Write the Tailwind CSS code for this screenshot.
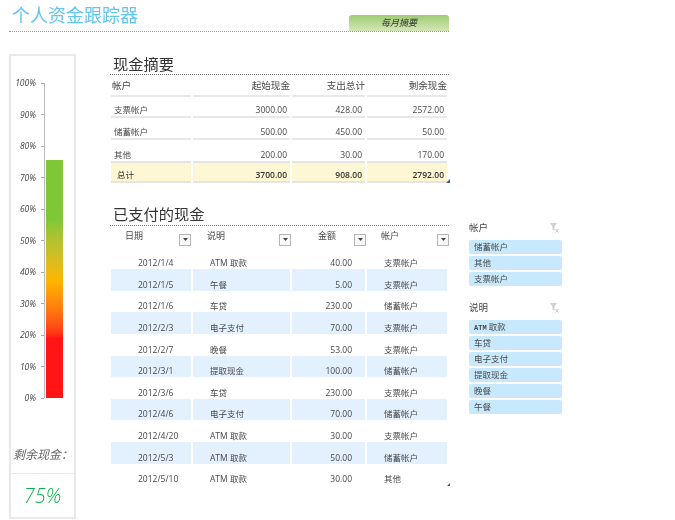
<!DOCTYPE html>
<html lang="zh">
<head>
<meta charset="utf-8">
<script src="https://cdn.jsdelivr.net/npm/@tailwindcss/browser@4"></script>
</head>
<body class="bg-white">
<div class="w-[675px] h-[520px] overflow-hidden blur-[0.3px] font-['Open_Sans','Noto_Sans_CJK_SC',sans-serif] text-[#484848] text-[8.5px] leading-[12px]">
  <header class="ml-[9px] w-[440px] h-[32px] flex justify-between items-end border-b border-dotted border-[#999]">
    <h1 class="pl-[3px] pb-[4px] text-[18px] leading-[24px] text-[#62c6f2]">个人资金跟踪器</h1>
    <div class="w-[100px] h-[16px] rounded-t-[3px] bg-linear-to-b from-[#9fcb70] to-[#d3e7b6] text-center text-[9px] leading-[16px] italic text-[#333]">每月摘要</div>
  </header>

  <div class="ml-[9px] mt-[22px] flex items-start">
    <aside class="w-[67px] h-[465px] border-2 border-[#e9e9e9] flex flex-col">
      <div class="mt-[22px] flex items-start h-[325px]">
        <div class="w-[33px] h-[325px] flex flex-col justify-between italic text-[8.5px] text-[#444]">
          <div class="h-[10px] leading-[10px] flex justify-end items-center">100%<span class="ml-[5px] w-[3px] h-px bg-[#aaa]"></span></div>
          <div class="h-[10px] leading-[10px] flex justify-end items-center">90%<span class="ml-[5px] w-[3px] h-px bg-[#aaa]"></span></div>
          <div class="h-[10px] leading-[10px] flex justify-end items-center">80%<span class="ml-[5px] w-[3px] h-px bg-[#aaa]"></span></div>
          <div class="h-[10px] leading-[10px] flex justify-end items-center">70%<span class="ml-[5px] w-[3px] h-px bg-[#aaa]"></span></div>
          <div class="h-[10px] leading-[10px] flex justify-end items-center">60%<span class="ml-[5px] w-[3px] h-px bg-[#aaa]"></span></div>
          <div class="h-[10px] leading-[10px] flex justify-end items-center">50%<span class="ml-[5px] w-[3px] h-px bg-[#aaa]"></span></div>
          <div class="h-[10px] leading-[10px] flex justify-end items-center">40%<span class="ml-[5px] w-[3px] h-px bg-[#aaa]"></span></div>
          <div class="h-[10px] leading-[10px] flex justify-end items-center">30%<span class="ml-[5px] w-[3px] h-px bg-[#aaa]"></span></div>
          <div class="h-[10px] leading-[10px] flex justify-end items-center">20%<span class="ml-[5px] w-[3px] h-px bg-[#aaa]"></span></div>
          <div class="h-[10px] leading-[10px] flex justify-end items-center">10%<span class="ml-[5px] w-[3px] h-px bg-[#aaa]"></span></div>
          <div class="h-[10px] leading-[10px] flex justify-end items-center">0%<span class="ml-[5px] w-[3px] h-px bg-[#aaa]"></span></div>
        </div>
        <div class="mt-[5px] h-[315px] flex items-end border-l border-[#bbb]">
          <div class="ml-[1px] w-[17px] h-[238px] bg-linear-to-t from-[#ff1515] from-25% via-[#ffb400] via-49% to-[#7fc737] to-75%"></div>
        </div>
      </div>
      <div class="mt-[44px] h-[16px] leading-[16px] pl-[2px] text-[12px] italic text-[#666]">剩余现金：</div>
      <div class="mt-[10px] flex-1 border-t border-[#e9e9e9] flex items-center justify-center text-[20px] font-light italic text-[#0fae4c]">75%</div>
    </aside>

    <main class="ml-[34px] w-[339px]">
      <h2 class="h-[21px] pl-[3px] text-[15.25px] leading-[20px] text-[#333] border-b border-dotted border-[#777]">现金摘要</h2>
      <div class="relative ml-[1px] grid grid-cols-[80px_97px_73px_80px] gap-x-[2px] auto-rows-[21.6px]">
        <div class="h-[22px] border-b-2 border-[#e8e8e8] pl-[1px] text-[9.6px] pt-[5px]">帐户</div>
        <div class="h-[22px] border-b-2 border-[#e8e8e8] text-right text-[9.6px] pt-[5px]">起始现金</div>
        <div class="h-[22px] border-b-2 border-[#e8e8e8] text-right text-[9.6px] pt-[5px]">支出总计</div>
        <div class="h-[22px] border-b-2 border-[#e8e8e8] text-right text-[9.6px] pt-[5px]">剩余现金</div>

        <div class="flex items-end pl-[3px] border-b-2 border-[#e8e8e8]">支票帐户</div>
        <div class="flex items-end justify-end pr-[3px] border-b-2 border-[#e8e8e8]">3000.00</div>
        <div class="flex items-end justify-end pr-[3px] border-b-2 border-[#e8e8e8]">428.00</div>
        <div class="flex items-end justify-end pr-[3px] border-b-2 border-[#e8e8e8]">2572.00</div>

        <div class="flex items-end pl-[3px] border-b-2 border-[#e8e8e8]">储蓄帐户</div>
        <div class="flex items-end justify-end pr-[3px] border-b-2 border-[#e8e8e8]">500.00</div>
        <div class="flex items-end justify-end pr-[3px] border-b-2 border-[#e8e8e8]">450.00</div>
        <div class="flex items-end justify-end pr-[3px] border-b-2 border-[#e8e8e8]">50.00</div>

        <div class="flex items-end pl-[3px]">其他</div>
        <div class="flex items-end justify-end pr-[3px]">200.00</div>
        <div class="flex items-end justify-end pr-[3px]">30.00</div>
        <div class="flex items-end justify-end pr-[3px]">170.00</div>

        <div class="flex items-end pl-[6px] h-[22px] bg-[#fdf7d3] border-y-2 border-y-[#e4e4e4] text-[#333]">总计</div>
        <div class="flex items-end justify-end pr-[3px] h-[22px] bg-[#fdf7d3] border-y-2 border-y-[#e4e4e4] font-semibold text-[#333]">3700.00</div>
        <div class="flex items-end justify-end pr-[3px] h-[22px] bg-[#fdf7d3] border-y-2 border-y-[#e4e4e4] font-semibold text-[#333]">908.00</div>
        <div class="flex items-end justify-end pr-[3px] h-[22px] bg-[#fdf7d3] border-y-2 border-y-[#e4e4e4] font-semibold text-[#333]">2792.00</div>
        <svg class="absolute right-[-1px] bottom-[0px] w-[4px] h-[4px]" viewBox="0 0 4 4"><path d="M4 0V4H0Z" fill="#3a5a9a"/></svg>
      </div>

      <h2 class="mt-[21px] h-[22px] pl-[3px] text-[15.25px] leading-[21px] text-[#333] border-b border-dotted border-[#777]">已支付的现金</h2>
      <div class="relative ml-[1px] grid grid-cols-[80px_97px_73px_80px] gap-x-[2px] auto-rows-[21.6px]">
        <div class="h-[21px] flex justify-between items-start pl-[14px] pt-[4px] text-[9px]">日期
          <span class="mt-[4px] w-[12px] h-[12px] border border-[#b5b5b5] bg-[#f8f8f8] flex items-center justify-center"><svg class="w-[5px] h-[3px]" viewBox="0 0 5 3"><path d="M0 0H5L2.5 3Z" fill="#444"/></svg></span></div>
        <div class="h-[21px] flex justify-between items-start pl-[14px] pt-[4px] text-[9px]">说明
          <span class="mt-[4px] -mr-[1px] w-[12px] h-[12px] border border-[#b5b5b5] bg-[#f8f8f8] flex items-center justify-center"><svg class="w-[5px] h-[3px]" viewBox="0 0 5 3"><path d="M0 0H5L2.5 3Z" fill="#444"/></svg></span></div>
        <div class="h-[21px] flex justify-between items-start pl-[26px] pt-[4px] text-[9px]">金额
          <span class="mt-[4px] -mr-[1px] w-[12px] h-[12px] border border-[#b5b5b5] bg-[#f8f8f8] flex items-center justify-center"><svg class="w-[5px] h-[3px]" viewBox="0 0 5 3"><path d="M0 0H5L2.5 3Z" fill="#444"/></svg></span></div>
        <div class="h-[21px] flex justify-between items-start pl-[14px] pt-[4px] text-[9px]">帐户
          <span class="mt-[4px] -mr-[2px] w-[12px] h-[12px] border border-[#b5b5b5] bg-[#f8f8f8] flex items-center justify-center"><svg class="w-[5px] h-[3px]" viewBox="0 0 5 3"><path d="M0 0H5L2.5 3Z" fill="#444"/></svg></span></div>

        <div class="flex items-end pl-[27px]">2012/1/4</div><div class="flex items-end pl-[17px]">ATM 取款</div><div class="flex items-end justify-end pr-[13px]">40.00</div><div class="flex items-end pl-[17px]">支票帐户</div>
        <div class="flex items-end pl-[27px] bg-[#e3f0fe]">2012/1/5</div><div class="flex items-end pl-[17px] bg-[#e3f0fe]">午餐</div><div class="flex items-end justify-end pr-[13px] bg-[#e3f0fe]">5.00</div><div class="flex items-end pl-[17px] bg-[#e3f0fe]">支票帐户</div>
        <div class="flex items-end pl-[27px]">2012/1/6</div><div class="flex items-end pl-[17px]">车贷</div><div class="flex items-end justify-end pr-[13px]">230.00</div><div class="flex items-end pl-[17px]">储蓄帐户</div>
        <div class="flex items-end pl-[27px] bg-[#e3f0fe]">2012/2/3</div><div class="flex items-end pl-[17px] bg-[#e3f0fe]">电子支付</div><div class="flex items-end justify-end pr-[13px] bg-[#e3f0fe]">70.00</div><div class="flex items-end pl-[17px] bg-[#e3f0fe]">支票帐户</div>
        <div class="flex items-end pl-[27px]">2012/2/7</div><div class="flex items-end pl-[17px]">晚餐</div><div class="flex items-end justify-end pr-[13px]">53.00</div><div class="flex items-end pl-[17px]">支票帐户</div>
        <div class="flex items-end pl-[27px] bg-[#e3f0fe]">2012/3/1</div><div class="flex items-end pl-[17px] bg-[#e3f0fe]">提取现金</div><div class="flex items-end justify-end pr-[13px] bg-[#e3f0fe]">100.00</div><div class="flex items-end pl-[17px] bg-[#e3f0fe]">储蓄帐户</div>
        <div class="flex items-end pl-[27px]">2012/3/6</div><div class="flex items-end pl-[17px]">车贷</div><div class="flex items-end justify-end pr-[13px]">230.00</div><div class="flex items-end pl-[17px]">支票帐户</div>
        <div class="flex items-end pl-[27px] bg-[#e3f0fe]">2012/4/6</div><div class="flex items-end pl-[17px] bg-[#e3f0fe]">电子支付</div><div class="flex items-end justify-end pr-[13px] bg-[#e3f0fe]">70.00</div><div class="flex items-end pl-[17px] bg-[#e3f0fe]">储蓄帐户</div>
        <div class="flex items-end pl-[27px]">2012/4/20</div><div class="flex items-end pl-[17px]">ATM 取款</div><div class="flex items-end justify-end pr-[13px]">30.00</div><div class="flex items-end pl-[17px]">支票帐户</div>
        <div class="flex items-end pl-[27px] bg-[#e3f0fe]">2012/5/3</div><div class="flex items-end pl-[17px] bg-[#e3f0fe]">ATM 取款</div><div class="flex items-end justify-end pr-[13px] bg-[#e3f0fe]">50.00</div><div class="flex items-end pl-[17px] bg-[#e3f0fe]">储蓄帐户</div>
        <div class="flex items-end pl-[27px]">2012/5/10</div><div class="flex items-end pl-[17px]">ATM 取款</div><div class="flex items-end justify-end pr-[13px]">30.00</div><div class="flex items-end pl-[17px]">其他</div>
        <svg class="absolute right-[-1px] bottom-[-1px] w-[3px] h-[3px]" viewBox="0 0 4 4"><path d="M4 0V4H0Z" fill="#3a5a9a"/></svg>
      </div>
    </main>

    <section class="ml-[20px] mt-[168px] w-[93px]">
      <div class="h-[12px] flex justify-between items-center text-[9.5px] pr-[3px]">帐户
        <svg class="w-[9px] h-[10px]" viewBox="0 0 9 10"><path d="M0 0H7L4.5 3.5V8L2.5 6.5V3.5Z" fill="#cfcfcf"/><path d="M5.5 6L8.5 9.5M8.5 6L5.5 9.5" stroke="#c4c4c4" stroke-width="1"/></svg>
      </div>
      <div class="mt-[6px] flex flex-col gap-y-[2px]">
        <div class="h-[14px] rounded-[2px] bg-[#c8e8fb] pl-[5px] leading-[14px]">储蓄帐户</div>
        <div class="h-[14px] rounded-[2px] bg-[#c8e8fb] pl-[5px] leading-[14px]">其他</div>
        <div class="h-[14px] rounded-[2px] bg-[#c8e8fb] pl-[5px] leading-[14px]">支票帐户</div>
      </div>
      <div class="mt-[16px] h-[12px] flex justify-between items-center text-[9.5px] pr-[3px]">说明
        <svg class="w-[9px] h-[10px]" viewBox="0 0 9 10"><path d="M0 0H7L4.5 3.5V8L2.5 6.5V3.5Z" fill="#cfcfcf"/><path d="M5.5 6L8.5 9.5M8.5 6L5.5 9.5" stroke="#c4c4c4" stroke-width="1"/></svg>
      </div>
      <div class="mt-[6px] flex flex-col gap-y-[2px]">
        <div class="h-[14px] rounded-[2px] bg-[#c8e8fb] pl-[5px] leading-[14px]"><span class="font-['Liberation_Mono'] font-bold text-[7px]">ATM</span> 取款</div>
        <div class="h-[14px] rounded-[2px] bg-[#c8e8fb] pl-[5px] leading-[14px]">车贷</div>
        <div class="h-[14px] rounded-[2px] bg-[#c8e8fb] pl-[5px] leading-[14px]">电子支付</div>
        <div class="h-[14px] rounded-[2px] bg-[#c8e8fb] pl-[5px] leading-[14px]">提取现金</div>
        <div class="h-[14px] rounded-[2px] bg-[#c8e8fb] pl-[5px] leading-[14px]">晚餐</div>
        <div class="h-[14px] rounded-[2px] bg-[#c8e8fb] pl-[5px] leading-[14px]">午餐</div>
      </div>
    </section>
  </div>
</div>
</body>
</html>
